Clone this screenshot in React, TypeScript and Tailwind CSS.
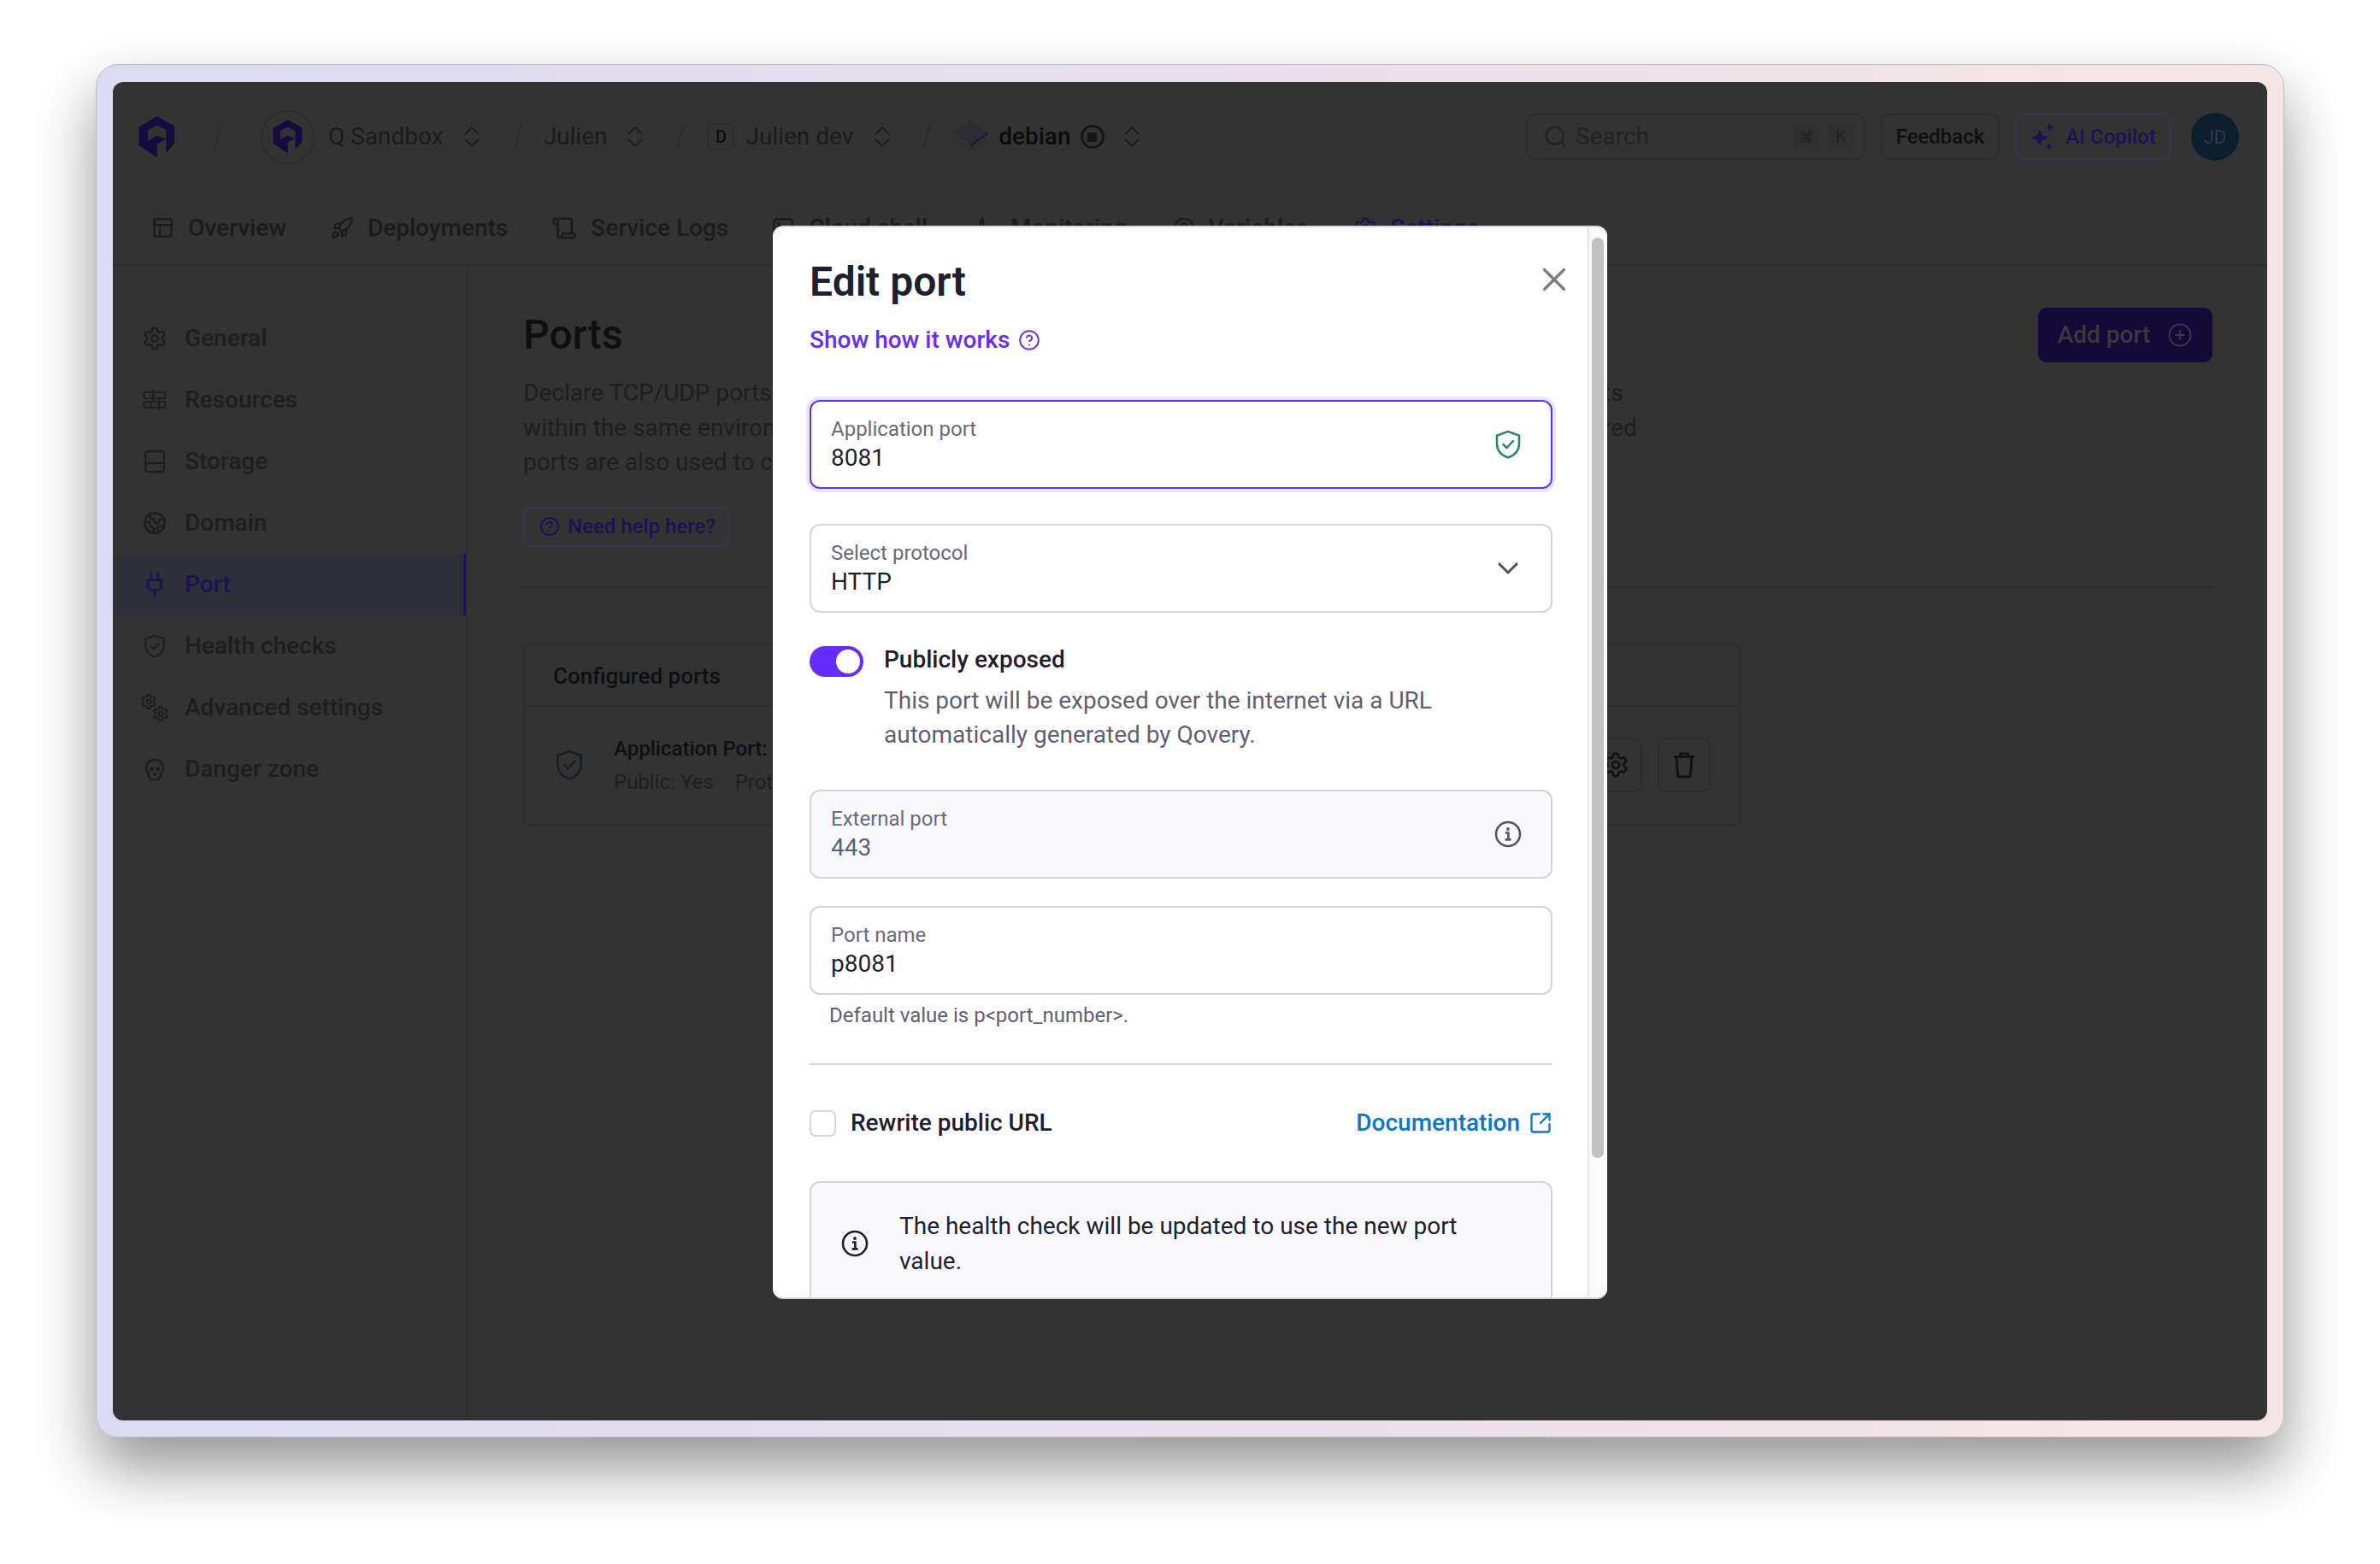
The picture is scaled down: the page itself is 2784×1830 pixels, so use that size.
import { ReactNode } from "react"
import {
  Activity,
  ChevronDown,
  CircleHelp,
  CirclePlus,
  Earth,
  PanelsTopLeft,
  Plug,
  Rocket,
  Scroll,
  Search,
  Settings,
  Skull,
  SquareArrowOutUpRight,
  SquareTerminal,
  X,
} from "lucide-react"

function QoveryLogo({ className }: { className: string }) {
  return (
    <svg viewBox="38 30 128 150" className={className}>
      <path
        fillRule="evenodd"
        d="M102 30 L165 65 V128 L135 160 V112 L103 130 V178 L38 135 V68 Z M102 62 L70 80 V118 L102 100 L135 112 V80 Z"
        fill="currentColor"
      />
    </svg>
  )
}

function InfoIcon({ className }: { className: string }) {
  return (
    <svg viewBox="0 0 32 32" fill="none" className={className}>
      <circle cx="16" cy="16" r="14" stroke="currentColor" strokeWidth="2.6" />
      <circle cx="16" cy="10" r="1.9" fill="currentColor" />
      <path d="M13 14.5h3.4V22M12.6 22.4h7" stroke="currentColor" strokeWidth="2.6" />
    </svg>
  )
}

function ShieldOk({ className }: { className: string }) {
  return (
    <svg viewBox="0 0 32 34" fill="none" stroke="currentColor" strokeWidth="2.5" className={className}>
      <path d="M16 1.8 L29 6.6 V15.5 C29 24 23.5 29.8 16 32.4 C8.5 29.8 3 24 3 15.5 V6.6 Z" strokeLinejoin="round" />
      <path d="M10.5 17 l4 4 l7.5 -8" strokeLinecap="round" strokeLinejoin="round" />
    </svg>
  )
}

function HardDrive({ className }: { className: string }) {
  return (
    <svg viewBox="0 0 26 28" fill="none" className={className}>
      <rect x="2" y="2" width="22" height="24" rx="3.5" stroke="currentColor" strokeWidth="2.4" />
      <path d="M2 16h22" stroke="currentColor" strokeWidth="2.4" />
      <path d="M14 21h1.6M19 21h1.6" stroke="currentColor" strokeWidth="2.2" />
    </svg>
  )
}

function Bricks({ className }: { className: string }) {
  return (
    <svg viewBox="0 0 28 28" fill="none" className={className}>
      <rect x="1.5" y="5" width="25" height="7" rx="2" stroke="currentColor" strokeWidth="2.2" />
      <rect x="1.5" y="16" width="25" height="7" rx="2" stroke="currentColor" strokeWidth="2.2" />
      <path d="M12 2v13M19 13v13M9 16v7" stroke="currentColor" strokeWidth="2.2" />
    </svg>
  )
}

function TwoCogs({ className }: { className: string }) {
  return (
    <span className={`relative block ${className}`}>
      <Settings className="absolute left-0 top-0 size-[20px]" strokeWidth={2.4} />
      <Settings className="absolute bottom-0 right-0 size-[20px]" strokeWidth={2.4} />
    </span>
  )
}

function TrashCan({ className }: { className: string }) {
  return (
    <svg viewBox="0 0 28 32" fill="none" stroke="currentColor" strokeWidth="2.8" className={className}>
      <path d="M2 6.5h24" />
      <path d="M9.5 6V2.8h9V6" />
      <path d="M5 7 L6.5 27.5 A2.5 2.5 0 0 0 9 30 H19 A2.5 2.5 0 0 0 21.5 27.5 L23 7" />
    </svg>
  )
}

function UpDown({ className = "" }: { className?: string }) {
  return (
    <svg viewBox="0 0 20 24" fill="none" stroke="currentColor" strokeWidth="1.8" className={`h-[24px] w-[20px] shrink-0 ${className}`}>
      <path d="M2 9 L10 1 L18 9" />
      <path d="M2 15 L10 23 L18 15" />
    </svg>
  )
}

function StackIcon({ className }: { className: string }) {
  return (
    <svg viewBox="0 0 42 37" className={className}>
      <path d="M21 0 L42 13 L21 28 L0 13 Z" fill="#2c2c35" />
      <path d="M21 27 L41 13 L42 15 L21 30 Z" fill="#1c1838" />
      <path d="M0 17 L21 31 L42 17 V20 L21 34 L0 20 Z" fill="#2f2f32" />
      <path d="M0 22 L21 35 L42 22 V24 L21 37 L0 24 Z" fill="#303032" />
    </svg>
  )
}

function Sparkle({ className }: { className: string }) {
  return (
    <svg viewBox="0 0 28 32" fill="currentColor" className={className}>
      <path d="M11 7 L14 14 L21 17 L14 20 L11 27 L8 20 L1 17 L8 14 Z" />
      <path d="M23 0 L24.4 3.6 L28 5 L24.4 6.4 L23 10 L21.6 6.4 L18 5 L21.6 3.6 Z" />
      <path d="M22 23 L23.2 26 L26 27.5 L23.2 29 L22 32 L20.8 29 L18 27.5 L20.8 26 Z" />
    </svg>
  )
}

function Slash({ className }: { className: string }) {
  return <span className={`${className} block h-[30px] w-[2px] rotate-[14deg] bg-[#2d2d2d]`} />
}

function Tab({ icon, label, className }: { icon: ReactNode; label: string; className: string }) {
  return (
    <div className={`flex items-center text-[28px] font-medium ${className}`}>
      {icon}
      <span className="ml-[16px]">{label}</span>
    </div>
  )
}

const sideItems = [
  { label: "General", icon: <Settings className="size-[30px]" strokeWidth={2} /> },
  { label: "Resources", icon: <Bricks className="size-[28px]" /> },
  { label: "Storage", icon: <HardDrive className="size-[28px]" /> },
  { label: "Domain", icon: <Earth className="size-[28px]" strokeWidth={2.2} /> },
  { label: "Port", icon: <Plug className="size-[32px]" strokeWidth={2} />, active: true },
  { label: "Health checks", icon: <ShieldOk className="h-[28px] w-[26px]" /> },
  { label: "Advanced settings", icon: <TwoCogs className="size-[34px] shrink-0" /> },
  { label: "Danger zone", icon: <Skull className="size-[30px]" strokeWidth={2} /> },
]

function Field({
  label,
  value,
  right,
  className = "",
  valueColor = "text-[#1f1f2b]",
}: {
  label: string
  value: string
  right?: ReactNode
  className?: string
  valueColor?: string
}) {
  return (
    <div
      className={`flex h-[104px] items-center justify-between rounded-[12px] border-2 border-[#d4d4dd] pl-[23px] pr-[30px] ${className}`}
    >
      <div className="flex flex-col">
        <span className="text-[24px] leading-[32px] text-[#6a6a78]">{label}</span>
        <span className={`text-[28px] leading-[36px] ${valueColor}`}>{value}</span>
      </div>
      {right && <span className="flex w-[40px] justify-center">{right}</span>}
    </div>
  )
}

export default function App() {
  return (
    <div className="h-[1830px] w-[2784px] overflow-hidden bg-white pl-[112px] pt-[75px] font-['Roboto',sans-serif]">
      {/* window frame */}
      <div className="h-[1607px] w-[2560px] rounded-[26px] border border-[#b9b9c0] bg-linear-to-r from-[#dbdaf1] to-[#f6e6e6] px-[19px] py-[20px] shadow-[0_36px_70px_rgba(0,0,0,0.42)]">
        <div className="relative flex h-[1566px] w-[2520px] flex-col overflow-hidden rounded-[12px] bg-[#333333] text-[#1b1b1b]">
          {/* top bar */}
          <header className="flex h-[128px] shrink-0 items-center pl-[29px] pr-[33px] text-[28px]">
            <QoveryLogo className="h-[49px] w-[45px] text-[#160b3f]" />
            <Slash className="ml-[48px]" />
            <div className="ml-[49px] flex size-[63px] items-center justify-center rounded-full border-2 border-[#2d2d2d]">
              <QoveryLogo className="h-[40px] w-[37px] text-[#160b3f]" />
            </div>
            <span className="ml-[16px]">Q Sandbox</span>
            <UpDown className="ml-[23px]" />
            <Slash className="ml-[43px]" />
            <span className="ml-[29px]">Julien</span>
            <UpDown className="ml-[23px]" />
            <Slash className="ml-[42px]" />
            <span className="ml-[30px] flex h-[32px] w-[32px] items-center justify-center rounded-[8px] border-2 border-[#2d2d2d] text-[20px] font-medium text-[#0d0d0d]">
              D
            </span>
            <span className="ml-[13px]">Julien dev</span>
            <UpDown className="ml-[24px]" />
            <Slash className="ml-[41px]" />
            <StackIcon className="ml-[29px] h-[37px] w-[42px]" />
            <span className="ml-[12px] font-medium text-[#0b0b0b]">debian</span>
            <span className="ml-[11px] flex size-[28px] items-center justify-center rounded-full border-[3px] border-[#161616]">
              <span className="size-[11px] bg-[#161616]" />
            </span>
            <UpDown className="ml-[22px]" />

            <div className="ml-auto flex h-[54px] w-[397px] items-center rounded-[10px] border-2 border-[#2d2d2d] pl-[18px] pr-[11px] text-[#222]">
              <Search className="size-[30px]" strokeWidth={1.9} />
              <span className="ml-[8px]">Search</span>
              <span className="ml-auto flex h-[32px] w-[31px] items-center justify-center rounded-[6px] bg-[#2f2f2f] text-[18px]">
                ⌘
              </span>
              <span className="ml-[9px] flex h-[32px] w-[32px] items-center justify-center rounded-[6px] bg-[#2f2f2f] text-[20px]">
                K
              </span>
            </div>
            <div className="ml-[18px] flex h-[54px] w-[139px] items-center justify-center rounded-[10px] border-2 border-[#2d2d2d] text-[24px] font-medium text-[#0f0f0f]">
              Feedback
            </div>
            <div className="ml-[18px] flex h-[54px] w-[183px] items-center justify-center rounded-[10px] border-2 border-[#36354a] text-[24px] font-medium text-[#1c1253]">
              <Sparkle className="h-[32px] w-[28px]" />
              <span className="ml-[13px]">AI Copilot</span>
            </div>
            <div className="ml-[23px] flex size-[56px] items-center justify-center rounded-full bg-[#0a1e2c] text-[22px] text-[#2a3a46]">
              JD
            </div>
          </header>

          {/* tabs */}
          <nav className="flex h-[87px] shrink-0 items-center border-b-2 border-[#2d2d2d] pl-[45px]">
            <Tab icon={<PanelsTopLeft className="size-[27px]" strokeWidth={2} />} label="Overview" className="" />
            <Tab icon={<Rocket className="size-[28px]" strokeWidth={2} />} label="Deployments" className="ml-[51px]" />
            <Tab icon={<Scroll className="size-[30px]" strokeWidth={2} />} label="Service Logs" className="ml-[51px]" />
            <Tab icon={<SquareTerminal className="size-[28px]" strokeWidth={2} />} label="Cloud shell" className="ml-[50px]" />
            <Tab icon={<Activity className="size-[28px]" strokeWidth={2} />} label="Monitoring" className="ml-[53px]" />
            <Tab icon={<CircleHelp className="size-[26px]" strokeWidth={2} />} label="Variables" className="ml-[53px]" />
            <Tab
              icon={<Settings className="size-[28px]" strokeWidth={2} />}
              label="Settings"
              className="ml-[52px] text-[#1c1253]"
            />
          </nav>

          <div className="flex min-h-0 flex-1">
            {/* sidebar */}
            <aside className="w-[415px] shrink-0 border-r-2 border-[#2d2d2d] pt-[49px]">
              {sideItems.map((item) => (
                <div
                  key={item.label}
                  className={`flex h-[72px] items-center text-[28px] font-medium ${
                    item.active ? "border-r-[3px] border-[#1d1258] bg-[#2f2f38] text-[#1c1253]" : "text-[#1e1e1e]"
                  }`}
                >
                  <span className="ml-[32px] flex w-[34px] items-center justify-center">{item.icon}</span>
                  <span className="ml-[18px]">{item.label}</span>
                </div>
              ))}
            </aside>

            {/* page content */}
            <main className="min-w-0 flex-1 pl-[65px] pr-[64px] pt-[49px]">
              <div className="flex items-start justify-between">
                <h1 className="text-[48px] font-medium leading-[64px] text-[#0f0f12]">Ports</h1>
                <button className="flex h-[64px] w-[204px] items-center justify-center rounded-[10px] bg-[#140a38] text-[28px] font-medium text-[#3a3a3e]">
                  Add port
                  <CirclePlus className="ml-[20px] size-[30px]" strokeWidth={1.6} />
                </button>
              </div>
              <p className="mt-[16px] text-[28px] leading-[40.5px] text-[#1e1e1e]">
                <span className="block whitespace-nowrap">Declare TCP/UDP ports used by your application here, and choose how they are reached by other clients</span>
                <span className="block whitespace-nowrap">within the same environment can reach each other through these ports, even whilst, they are not declared</span>
                <span className="block whitespace-nowrap">ports are also used to check the health of your application.</span>
              </p>
              <div className="mt-[31px] flex h-[47px] w-[241px] items-center rounded-[8px] border-2 border-[#37364a] pl-[17px] text-[24px] font-medium text-[#1c1253]">
                <CircleHelp className="size-[24px]" strokeWidth={2} />
                <span className="ml-[9px]">Need help here?</span>
              </div>
              <div className="mt-[46px] h-[2px] bg-[#2d2d2d]" />

              <div className="mt-[65px] w-[1424px] rounded-[8px] border-2 border-[#2d2d2d]">
                <div className="flex h-[72px] items-center border-b-2 border-[#2d2d2d] pl-[33px] pt-[3px] text-[26px] font-medium text-[#0f0f12]">
                  Configured ports
                </div>
                <div className="flex h-[137px] items-center pl-[35px] pr-[33px]">
                  <ShieldOk className="h-[36px] w-[34px] text-[#1a1f24]" />
                  <div className="ml-[35px]">
                    <div className="text-[24px] font-medium leading-[36px] text-[#0f0f12]">Application Port: 8081</div>
                    <div className="mt-[3px] flex text-[24px] leading-[36px] text-[#1e1e1e]">
                      Public: Yes
                      <span className="ml-[25px]">Protocol: HTTP</span>
                    </div>
                  </div>
                  <div className="ml-auto flex h-[64px] w-[62px] items-center justify-center rounded-[10px] border-2 border-[#2d2d2d]">
                    <Settings className="size-[32px] text-[#111]" strokeWidth={2} />
                  </div>
                  <div className="ml-[18px] flex h-[64px] w-[62px] items-center justify-center rounded-[10px] border-2 border-[#2d2d2d]">
                    <TrashCan className="h-[32px] w-[28px] text-[#111]" />
                  </div>
                </div>
              </div>
            </main>
          </div>

          {/* modal */}
          <div className="absolute left-[772px] top-[168px] flex h-[1256px] w-[976px] overflow-hidden rounded-[12px] border-y-2 border-[#d6d6e0] bg-white">
            <div className="min-w-0 flex-1 pl-[43px] pr-[41px] pt-[36px]">
              <div className="flex items-center justify-between">
                <h2 className="text-[48px] font-semibold leading-[56px] text-[#20202c]">Edit port</h2>
                <X className="mb-[6px] mr-[-25px] size-[46px] text-[#7b7b88]" strokeWidth={1.7} />
              </div>
              <div className="mt-[20px] flex h-[40px] items-center text-[28px] font-medium text-[#642dff]">
                Show how it works
                <CircleHelp className="ml-[10px] size-[26px]" strokeWidth={1.8} />
              </div>

              <Field
                label="Application port"
                value="8081"
                className="mt-[50px] !border-[#642dff] shadow-[0_0_0_4px_#e9e4ff]"
                right={<ShieldOk className="h-[34px] w-[32px] text-[#1f8a5f]" />}
              />
              <Field
                label="Select protocol"
                value="HTTP"
                className="mt-[41px]"
                right={<ChevronDown className="size-[40px] text-[#55555f]" strokeWidth={1.9} />}
              />

              <div className="mt-[35px] flex">
                <div className="mt-[4px] flex h-[36px] w-[63px] shrink-0 items-center justify-end rounded-full bg-[#642dff] pr-[4px]">
                  <span className="size-[28px] rounded-full bg-white" />
                </div>
                <div className="ml-[24px]">
                  <div className="text-[28px] font-medium leading-[40px] text-[#20202c]">Publicly exposed</div>
                  <p className="mt-[8px] text-[28px] leading-[40px] text-[#5f5f6e]">
                    This port will be exposed over the internet via a URL
                    <br />
                    automatically generated by Qovery.
                  </p>
                </div>
              </div>

              <Field
                label="External port"
                value="443"
                className="mt-[44px] bg-[#f9f9fb]"
                valueColor="text-[#5f5f6e]"
                right={<InfoIcon className="size-[32px] text-[#55555f]" />}
              />
              <Field label="Port name" value="p8081" className="mt-[32px]" />
              <p className="mt-[8px] pl-[23px] text-[24px] leading-[32px] text-[#5f5f6e]">
                Default value is p&lt;port_number&gt;.
              </p>
              <div className="mt-[40px] h-[2px] bg-[#d6d6e0]" />

              <div className="mt-[53px] flex h-[30px] items-center">
                <span className="size-[31px] rounded-[7px] border-2 border-[#d4d4dd]" />
                <span className="ml-[17px] text-[28px] font-medium text-[#20202c]">Rewrite public URL</span>
                <span className="ml-auto text-[28px] font-medium text-[#0b75d1]">Documentation</span>
                <SquareArrowOutUpRight className="ml-[10px] size-[28px] text-[#0b75d1]" strokeWidth={2} />
              </div>

              <div className="mt-[53px] flex items-center rounded-[12px] border-2 border-[#d4d4dd] bg-[#f9f9fb] pb-[36px] pl-[35px] pr-[90px] pt-[30px]">
                <InfoIcon className="size-[32px] shrink-0 text-[#20202c]" />
                <p className="ml-[36px] text-[28px] leading-[41px] text-[#20202c]">
                  The health check will be updated to use the new port value.
                </p>
              </div>
            </div>

            {/* scrollbar */}
            <div className="w-[23px] shrink-0 border-l-2 border-[#e6e6ea] bg-[#fafafa] pl-[3px] pt-[12px]">
              <div className="h-[1077px] w-[14px] rounded-full bg-[#c0c0c0]" />
            </div>
          </div>
        </div>
      </div>
    </div>
  )
}
